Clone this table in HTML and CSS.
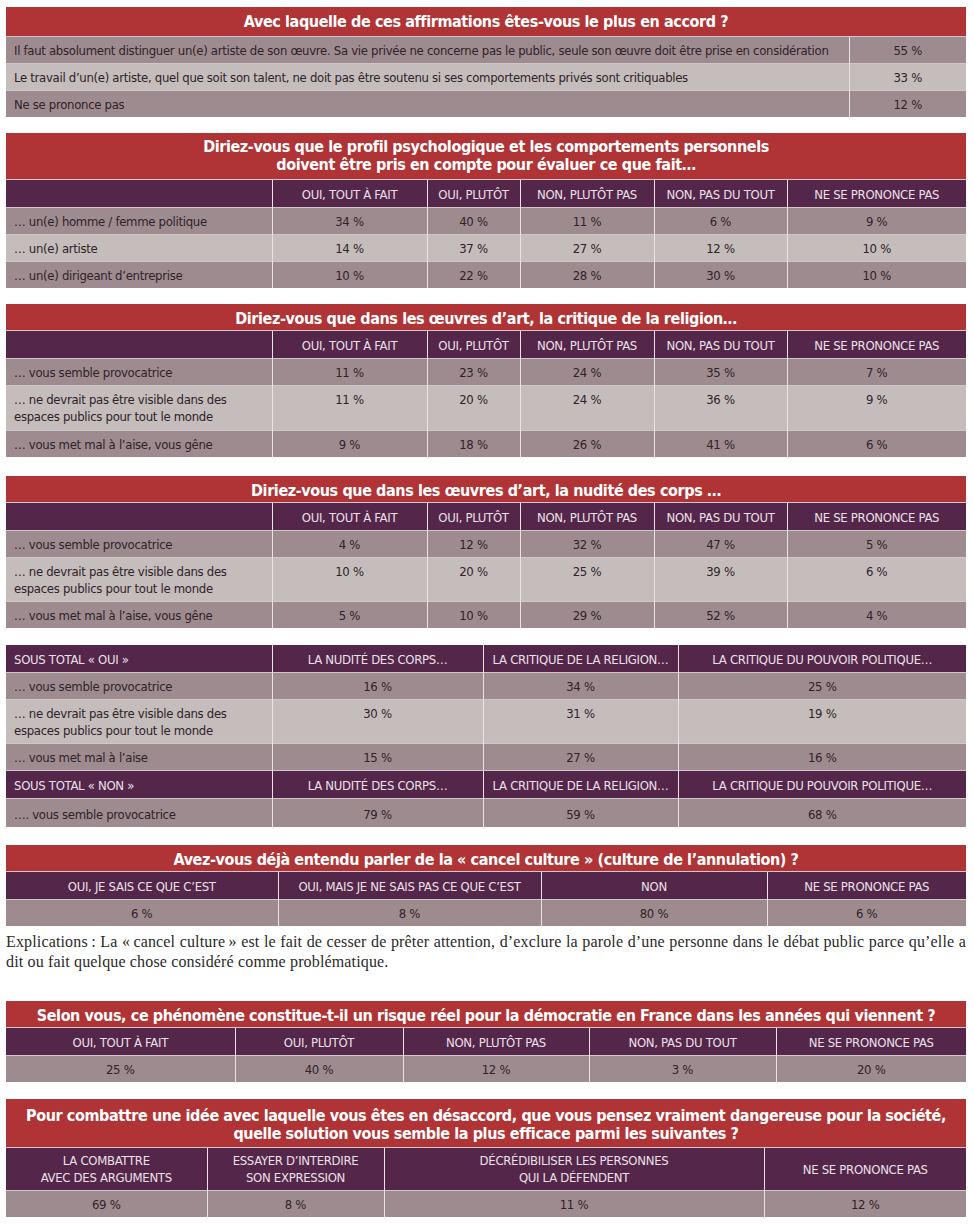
FILE: index.html
```html
<!DOCTYPE html>
<html lang="fr">
<head>
<meta charset="utf-8">
<link rel="stylesheet" href="styles.css">
</head>
<body>
<main class="page">

<table class="survey t1">
  <colgroup><col class="c843"><col></colgroup>
  <tr><th class="title tall" colspan="2">Avec laquelle de ces affirmations êtes-vous le plus en accord ?</th></tr>
  <tr class="dark"><td class="label">Il faut absolument distinguer un(e) artiste de son œuvre. Sa vie privée ne concerne pas le public, seule son œuvre doit être prise en considération</td><td>55 %</td></tr>
  <tr class="light"><td class="label">Le travail d’un(e) artiste, quel que soit son talent, ne doit pas être soutenu si ses comportements privés sont critiquables</td><td>33 %</td></tr>
  <tr class="dark"><td class="label">Ne se prononce pas</td><td>12 %</td></tr>
</table>

<table class="survey t2">
  <colgroup><col class="w266"><col class="w155"><col class="w93"><col class="w134"><col class="w133"><col></colgroup>
  <tr><th class="title" colspan="6">Diriez-vous que le profil psychologique et les comportements personnels<br>doivent être pris en compte pour évaluer ce que fait…</th></tr>
  <tr class="head"><td></td><td>OUI, TOUT À FAIT</td><td>OUI, PLUTÔT</td><td>NON, PLUTÔT PAS</td><td>NON, PAS DU TOUT</td><td>NE SE PRONONCE PAS</td></tr>
  <tr class="dark"><td class="label">… un(e) homme / femme politique</td><td>34 %</td><td>40 %</td><td>11 %</td><td>6 %</td><td>9 %</td></tr>
  <tr class="light"><td class="label">… un(e) artiste</td><td>14 %</td><td>37 %</td><td>27 %</td><td>12 %</td><td>10 %</td></tr>
  <tr class="dark"><td class="label">… un(e) dirigeant d’entreprise</td><td>10 %</td><td>22 %</td><td>28 %</td><td>30 %</td><td>10 %</td></tr>
</table>

<table class="survey t2 t3">
  <colgroup><col class="w266"><col class="w155"><col class="w93"><col class="w134"><col class="w133"><col></colgroup>
  <tr><th class="title short" colspan="6">Diriez-vous que dans les œuvres d’art, la critique de la religion…</th></tr>
  <tr class="head"><td></td><td>OUI, TOUT À FAIT</td><td>OUI, PLUTÔT</td><td>NON, PLUTÔT PAS</td><td>NON, PAS DU TOUT</td><td>NE SE PRONONCE PAS</td></tr>
  <tr class="dark"><td class="label">… vous semble provocatrice</td><td>11 %</td><td>23 %</td><td>24 %</td><td>35 %</td><td>7 %</td></tr>
  <tr class="light double"><td class="label">… ne devrait pas être visible dans des<br>espaces publics pour tout le monde</td><td>11 %</td><td>20 %</td><td>24 %</td><td>36 %</td><td>9 %</td></tr>
  <tr class="dark"><td class="label">… vous met mal à l’aise, vous gêne</td><td>9 %</td><td>18 %</td><td>26 %</td><td>41 %</td><td>6 %</td></tr>
</table>

<table class="survey t2 t4">
  <colgroup><col class="w266"><col class="w155"><col class="w93"><col class="w134"><col class="w133"><col></colgroup>
  <tr><th class="title short" colspan="6">Diriez-vous que dans les œuvres d’art, la nudité des corps …</th></tr>
  <tr class="head"><td></td><td>OUI, TOUT À FAIT</td><td>OUI, PLUTÔT</td><td>NON, PLUTÔT PAS</td><td>NON, PAS DU TOUT</td><td>NE SE PRONONCE PAS</td></tr>
  <tr class="dark"><td class="label">… vous semble provocatrice</td><td>4 %</td><td>12 %</td><td>32 %</td><td>47 %</td><td>5 %</td></tr>
  <tr class="light"><td class="label">… ne devrait pas être visible dans des<br>espaces publics pour tout le monde</td><td>10 %</td><td>20 %</td><td>25 %</td><td>39 %</td><td>6 %</td></tr>
  <tr class="dark"><td class="label">… vous met mal à l’aise, vous gêne</td><td>5 %</td><td>10 %</td><td>29 %</td><td>52 %</td><td>4 %</td></tr>
</table>

<table class="survey t5">
  <colgroup><col class="w266"><col class="w211"><col class="w195"><col></colgroup>
  <tr class="head"><td class="label">SOUS TOTAL « OUI »</td><td>LA NUDITÉ DES CORPS…</td><td>LA CRITIQUE DE LA RELIGION…</td><td>LA CRITIQUE DU POUVOIR POLITIQUE…</td></tr>
  <tr class="dark"><td class="label">… vous semble provocatrice</td><td>16 %</td><td>34 %</td><td>25 %</td></tr>
  <tr class="light"><td class="label">… ne devrait pas être visible dans des<br>espaces publics pour tout le monde</td><td>30 %</td><td>31 %</td><td>19 %</td></tr>
  <tr class="dark"><td class="label">… vous met mal à l’aise</td><td>15 %</td><td>27 %</td><td>16 %</td></tr>
  <tr class="head"><td class="label">SOUS TOTAL « NON »</td><td>LA NUDITÉ DES CORPS…</td><td>LA CRITIQUE DE LA RELIGION…</td><td>LA CRITIQUE DU POUVOIR POLITIQUE…</td></tr>
  <tr class="dark last"><td class="label">…. vous semble provocatrice</td><td>79 %</td><td>59 %</td><td>68 %</td></tr>
</table>

<table class="survey t6">
  <colgroup><col class="w272"><col class="w263"><col class="w226"><col></colgroup>
  <tr><th class="title short" colspan="4">Avez-vous déjà entendu parler de la « cancel culture » (culture de l’annulation) ?</th></tr>
  <tr class="head"><td>OUI, JE SAIS CE QUE C’EST</td><td>OUI, MAIS JE NE SAIS PAS CE QUE C’EST</td><td>NON</td><td>NE SE PRONONCE PAS</td></tr>
  <tr class="dark"><td>6 %</td><td>8 %</td><td>80 %</td><td>6 %</td></tr>
</table>

<p class="note">Explications&#8239;: La «&#8239;cancel culture&#8239;» est le fait de cesser de prêter attention, d’exclure la parole d’une personne dans le débat public parce qu’elle a dit ou fait quelque chose considéré comme problématique.</p>

<table class="survey t7">
  <colgroup><col class="w229"><col class="w168"><col class="w186"><col class="w187"><col></colgroup>
  <tr><th class="title short" colspan="5">Selon vous, ce phénomène constitue-t-il un risque réel pour la démocratie en France dans les années qui viennent ?</th></tr>
  <tr class="head"><td>OUI, TOUT À FAIT</td><td>OUI, PLUTÔT</td><td>NON, PLUTÔT PAS</td><td>NON, PAS DU TOUT</td><td>NE SE PRONONCE PAS</td></tr>
  <tr class="dark"><td>25 %</td><td>40 %</td><td>12 %</td><td>3 %</td><td>20 %</td></tr>
</table>

<table class="survey t8">
  <colgroup><col class="w201"><col class="w177"><col class="w380"><col></colgroup>
  <tr><th class="title roomy" colspan="4">Pour combattre une idée avec laquelle vous êtes en désaccord, que vous pensez vraiment dangereuse pour la société,<br>quelle solution vous semble la plus efficace parmi les suivantes ?</th></tr>
  <tr class="head two"><td>LA COMBATTRE<br>AVEC DES ARGUMENTS</td><td>ESSAYER D’INTERDIRE<br>SON EXPRESSION</td><td>DÉCRÉDIBILISER LES PERSONNES<br>QUI LA DÉFENDENT</td><td class="mid">NE SE PRONONCE PAS</td></tr>
  <tr class="dark"><td>69 %</td><td>8 %</td><td>11 %</td><td>12 %</td></tr>
</table>

</main>
</body>
</html>
```

FILE: styles.css
```css
html, body {
  margin: 0;
  padding: 0;
  background: #ffffff;
}

.page {
  width: 960px;
  padding: 7px 0 0 6px;
  display: flex;
  flex-direction: column;
  font-family: "DejaVu Sans Condensed", "Liberation Sans", sans-serif;
}

.survey {
  width: 960px;
  border-collapse: collapse;
  table-layout: fixed;
  margin-bottom: 16px;
  font-size: 13px;
  letter-spacing: -0.3px;
  color: #2f2329;
}

.survey td {
  padding: 5px 4px 4px;
  line-height: 17px;
  text-align: center;
  vertical-align: top;
  border-left: 1px solid #e9e3e5;
  white-space: nowrap;
}

.survey td:first-child {
  border-left: none;
}

.survey td.label {
  text-align: left;
  padding-left: 8px;
}

.survey tr + tr td {
  border-top: 1px solid #cfc7c9;
}

.title {
  background: #b03435;
  color: #ffffff;
  font-weight: bold;
  font-size: 16px;
  letter-spacing: -0.4px;
  line-height: 18px;
  padding: 5px 4px 5px;
  text-align: center;
  white-space: nowrap;
}

.title.tall {
  padding-top: 6px;
}

.title.short {
  padding-top: 6px;
  padding-bottom: 2px;
}

.title.roomy {
  padding-top: 8px;
  padding-bottom: 4px;
}

.head td {
  background: #53264a;
  color: #ece1e8;
  padding-top: 6px;
  padding-bottom: 4px;
}

.head.two td {
  padding-top: 4px;
  padding-bottom: 4px;
}

.head.two td.mid {
  vertical-align: middle;
}

.dark td {
  background: #9e8b90;
}

.light td {
  background: #c5bcbc;
}

.double td {
  padding-bottom: 5px;
}

.last td {
  padding-top: 7px;
}

.c843 { width: 843px; }
.w266 { width: 266px; }
.w155 { width: 155px; }
.w93 { width: 93px; }
.w134 { width: 134px; }
.w133 { width: 133px; }
.w211 { width: 211px; }
.w195 { width: 195px; }
.w272 { width: 272px; }
.w263 { width: 263px; }
.w226 { width: 226px; }
.w229 { width: 229px; }
.w168 { width: 168px; }
.w186 { width: 186px; }
.w187 { width: 187px; }
.w201 { width: 201px; }
.w177 { width: 177px; }
.w380 { width: 380px; }

.t3 { margin-bottom: 19px; }

.t5 { margin-top: 1px; margin-bottom: 18px; }

.t6 { margin-bottom: 6px; }

.note {
  margin: 0 0 29px;
  font-family: "Liberation Serif", serif;
  font-size: 16px;
  letter-spacing: 0.15px;
  line-height: 20px;
  color: #2a2a2a;
  text-align: justify;
  width: 960px;
}

.t7 { margin-bottom: 17px; }
```
